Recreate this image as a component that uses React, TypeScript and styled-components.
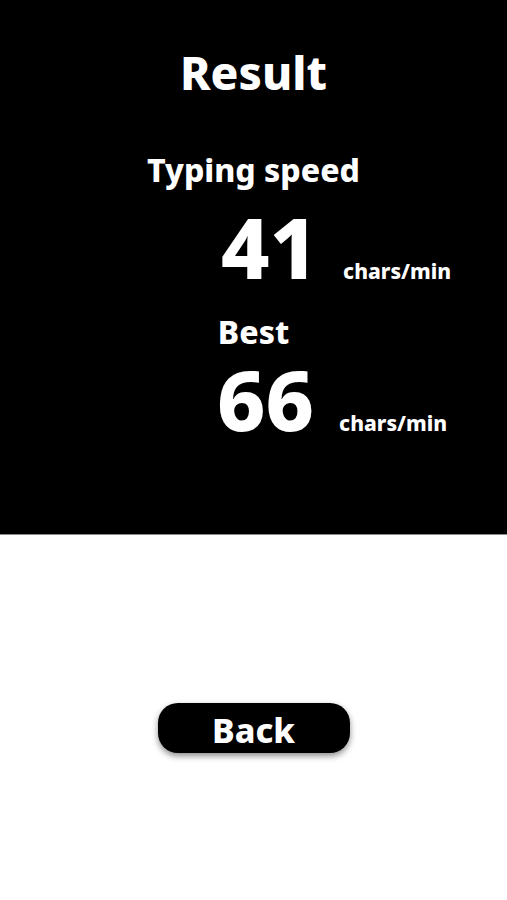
import styled, { createGlobalStyle } from "styled-components";

const GlobalStyle = createGlobalStyle`
  html, body {
    margin: 0;
    padding: 0;
    background: #ffffff;
  }
  body {
    font-family: "Noto Sans", "Noto Sans CJK JP", sans-serif;
  }
`;

const Screen = styled.div`
  width: 507px;
  height: 900px;
  display: flex;
  flex-direction: column;
  background: #ffffff;
`;

const ResultPanel = styled.section`
  height: 535px;
  box-sizing: border-box;
  background: #000000;
  border-bottom: 1px solid #8a8a8a;
  color: #ffffff;
  display: flex;
  flex-direction: column;
  padding-top: 49px;
`;

const Title = styled.h1`
  margin: 0;
  font-size: 46px;
  line-height: 1;
  font-weight: 800;
  text-align: center;
`;

const Label = styled.h2<{ $gap: number }>`
  margin: ${({ $gap }) => $gap}px 0 0;
  font-size: 32px;
  line-height: 1;
  font-weight: 800;
  text-align: center;
`;

const ScoreRow = styled.div<{ $gap: number; $indent: number }>`
  display: flex;
  align-items: baseline;
  gap: 25px;
  margin-top: ${({ $gap }) => $gap}px;
  padding-left: ${({ $indent }) => $indent}px;
`;

const ScoreValue = styled.span`
  font-size: 84px;
  line-height: 1;
  font-weight: 800;
`;

const ScoreUnit = styled.span`
  font-size: 21px;
  line-height: 1;
  font-weight: 800;
`;

const Footer = styled.div`
  display: flex;
  justify-content: center;
  padding-top: 168px;
`;

const BackButton = styled.button`
  width: 192px;
  height: 50px;
  padding: 4px 0 0;
  border: none;
  border-radius: 20px;
  background: #000000;
  color: #ffffff;
  font-family: "Noto Sans", "Noto Sans CJK JP", sans-serif;
  font-size: 34px;
  font-weight: 800;
  line-height: 1;
  box-shadow: 0 3px 6px rgba(0, 0, 0, 0.45);
  cursor: pointer;
`;

export default function App() {
  return (
    <>
      <GlobalStyle />
      <Screen>
        <ResultPanel>
          <Title>Result</Title>
          <Label $gap={59}>Typing speed</Label>
          <ScoreRow $gap={19} $indent={221}>
            <ScoreValue>41</ScoreValue>
            <ScoreUnit>chars/min</ScoreUnit>
          </ScoreRow>
          <Label $gap={27}>Best</Label>
          <ScoreRow $gap={9} $indent={217}>
            <ScoreValue>66</ScoreValue>
            <ScoreUnit>chars/min</ScoreUnit>
          </ScoreRow>
        </ResultPanel>
        <Footer>
          <BackButton>Back</BackButton>
        </Footer>
      </Screen>
    </>
  );
}
